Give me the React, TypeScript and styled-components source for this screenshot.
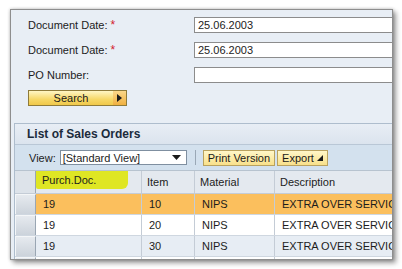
import React from 'react'
import styled, { createGlobalStyle } from 'styled-components'

const Global = createGlobalStyle`
  html, body {
    margin: 0;
    padding: 0;
    background: #ffffff;
  }
  body {
    font-family: "Liberation Sans", Arial, sans-serif;
  }
`

const rows = [
  { doc: '19', item: '10', material: 'NIPS', desc: 'EXTRA OVER SERVICE', kind: 'selected' },
  { doc: '19', item: '20', material: 'NIPS', desc: 'EXTRA OVER SERVICE', kind: 'plain' },
  { doc: '19', item: '30', material: 'NIPS', desc: 'EXTRA OVER SERVICE', kind: 'alt' },
  { doc: '', item: '', material: '', desc: '', kind: 'plain' },
]

const App = () => (
  <Page>
    <Global />
    <Frame>
      <Form>
        <Field>
          <Label>Document Date: <Req>*</Req></Label>
          <Input>25.06.2003</Input>
        </Field>
        <Field>
          <Label>Document Date: <Req>*</Req></Label>
          <Input>25.06.2003</Input>
        </Field>
        <Field>
          <Label>PO Number:</Label>
          <Input />
        </Field>
        <SearchButton>
          <SearchText>Search</SearchText>
          <SearchArrow>
            <svg width="5" height="8" viewBox="0 0 5 8">
              <path d="M0 0 L5 4 L0 8 Z" fill="#1a1a1a" />
            </svg>
          </SearchArrow>
        </SearchButton>
      </Form>

      <Panel>
        <PanelTitle>List of Sales Orders</PanelTitle>
        <Toolbar>
          <ViewLabel>View:</ViewLabel>
          <Select>
            <span>[Standard View]</span>
            <svg width="9" height="5" viewBox="0 0 9 5">
              <path d="M0 0 L9 0 L4.5 5 Z" fill="#1a1a1a" />
            </svg>
          </Select>
          <Separator />
          <ToolButton>Print Version</ToolButton>
          <ToolButton>
            Export
            <svg width="6" height="6" viewBox="0 0 6 6" style={{ marginLeft: 3 }}>
              <path d="M6 0 L6 6 L0 6 Z" fill="#1a1a1a" />
            </svg>
          </ToolButton>
        </Toolbar>
        <Table>
          <HeadRow>
            <SelectorCell $head />
            <HeadCell $w={106}>
              <Marker>Purch.Doc.</Marker>
            </HeadCell>
            <HeadCell $w={53}>Item</HeadCell>
            <HeadCell $w={80}>Material</HeadCell>
            <HeadCell $w={140}>Description</HeadCell>
          </HeadRow>
          {rows.map((r, i) => (
            <Row key={i} $kind={r.kind}>
              <SelectorCell />
              <Cell $w={106}>{r.doc}</Cell>
              <Cell $w={53}>{r.item}</Cell>
              <Cell $w={80}>{r.material}</Cell>
              <Cell $w={140}>{r.desc}</Cell>
            </Row>
          ))}
        </Table>
      </Panel>
    </Frame>
  </Page>
)

const Page = styled.div`
  padding: 9px 0 0 10px;
  width: 402px;
  height: 269px;
  box-sizing: border-box;
  overflow: hidden;
`
const Frame = styled.div`
  width: 383px;
  height: 251px;
  box-sizing: border-box;
  border: 1px solid #8e8e8e;
  background: #e8eef5;
  box-shadow: 0 0 3px rgba(0, 0, 0, 0.25), 3px 3px 5px rgba(0, 0, 0, 0.4);
  overflow: hidden;
`
const Form = styled.div`
  padding: 7px 0 0 17px;
  display: flex;
  flex-direction: column;
`
const Field = styled.div`
  display: flex;
  align-items: center;
  height: 16px;
  margin-bottom: 9px;
`
const Label = styled.div`
  width: 166px;
  flex: none;
  font-size: 11px;
  color: #1c1c1c;
`
const Req = styled.span`
  color: #d3212d;
  font-size: 12px;
`
const Input = styled.div`
  flex: none;
  width: 220px;
  height: 16px;
  box-sizing: border-box;
  border: 1px solid #8c8c8c;
  background: #ffffff;
  font-size: 11px;
  line-height: 14px;
  padding-left: 3px;
  color: #1c1c1c;
`
const SearchButton = styled.div`
  display: flex;
  width: 99px;
  height: 16px;
  box-sizing: border-box;
  margin-top: -2px;
  border: 1px solid #8f7b3a;
  background: linear-gradient(#fff6c4, #f6d766 60%, #f0c84a);
`
const SearchText = styled.div`
  flex: 1;
  text-align: center;
  font-size: 11px;
  line-height: 14px;
  color: #1a1a1a;
`
const SearchArrow = styled.div`
  width: 13px;
  display: flex;
  align-items: center;
  justify-content: center;
  background: linear-gradient(#fbd78a, #f0b040);
`
const Panel = styled.div`
  margin: 17px 0 0 3px;
  border-top: 1px solid #aebdcd;
  border-left: 1px solid #aebdcd;
`
const PanelTitle = styled.div`
  height: 20px;
  line-height: 20px;
  padding-left: 12px;
  font-size: 12px;
  font-weight: bold;
  color: #1b2b3c;
  background: linear-gradient(#e8eef5, #dbe4ee);
  border-bottom: 1px solid #b9c7d6;
`
const Toolbar = styled.div`
  height: 25px;
  display: flex;
  align-items: center;
  padding-left: 14px;
  background: #d3e1ee;
  border-bottom: 1px solid #b7c3cf;
  font-size: 11px;
  color: #1c1c1c;
`
const ViewLabel = styled.span`
  margin-right: 4px;
`
const Select = styled.div`
  width: 127px;
  height: 15px;
  box-sizing: border-box;
  display: flex;
  align-items: center;
  justify-content: space-between;
  padding: 0 5px 0 2px;
  background: #ffffff;
  border: 1px solid #7f8fa0;
`
const Separator = styled.div`
  width: 1px;
  height: 15px;
  background: #9aa8b6;
  margin: 0 7px 0 8px;
`
const ToolButton = styled.div`
  display: flex;
  align-items: center;
  height: 16px;
  box-sizing: border-box;
  padding: 0 4px;
  margin-right: 2px;
  border: 1px solid #b9a25f;
  background: linear-gradient(#fff7c8, #f8e08a);
  color: #1a1a1a;
`
const Table = styled.div`
  display: flex;
  flex-direction: column;
  font-size: 11px;
  color: #1c1c1c;
`
const HeadRow = styled.div`
  display: flex;
  height: 22px;
  background: #e4e9ef;
  border-bottom: 1px solid #c4ccd6;
`
const HeadCell = styled.div<{ $w: number }>`
  flex: none;
  width: ${(p) => p.$w}px;
  box-sizing: border-box;
  border-right: 1px solid #c4ccd6;
  padding-left: 5px;
  display: flex;
  align-items: center;
`
const Marker = styled.span`
  background: #dfe624;
  margin-left: -5px;
  margin-top: -4px;
  padding: 3px 32px 3px 6px;
  border-radius: 0 0 6px 2px;
`
const Row = styled.div<{ $kind: string }>`
  display: flex;
  height: 21px;
  box-sizing: border-box;
  border-bottom: 1px solid #cfd7e0;
  background: ${(p) =>
    p.$kind === 'selected' ? '#fbbf5d' : p.$kind === 'alt' ? '#e7edf4' : '#ffffff'};
`
const Cell = styled.div`
  flex: none;
  width: ${(p: { $w: number }) => p.$w}px;
  box-sizing: border-box;
  border-right: 1px solid #c4ccd6;
  padding-left: 7px;
  display: flex;
  align-items: center;
  white-space: nowrap;
  overflow: hidden;
`
const SelectorCell = styled.div<{ $head?: boolean }>`
  flex: none;
  width: 21px;
  box-sizing: border-box;
  background: ${(p) => (p.$head ? '#dde3ea' : 'linear-gradient(#e6eaef, #ccd3db)')};
  border-right: 1px solid #9aa6b3;
  border-top: ${(p) => (p.$head ? 'none' : '1px solid #f4f6f8')};
  border-left: ${(p) => (p.$head ? 'none' : '1px solid #f4f6f8')};
`

export default App
